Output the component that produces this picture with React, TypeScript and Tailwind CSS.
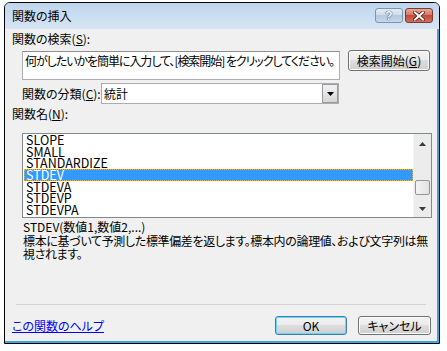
import React from "react";

const jp = "font-['Noto_Sans_CJK_JP',sans-serif] [font-feature-settings:'palt']";

const items = ["SLOPE", "SMALL", "STANDARDIZE", "STDEV", "STDEVA", "STDEVP", "STDEVPA"];

function Btn({ children, def, className }: { children: React.ReactNode; def?: boolean; className?: string }) {
  return (
    <div
      className={
        "flex items-center justify-center rounded-[3px] border text-[12px] leading-none text-black " +
        (def
          ? "border-[#3c7fb1] shadow-[inset_0_0_0_1px_#6ad6f6] bg-[linear-gradient(#f2f2f2_0%,#ebebeb_50%,#dddddd_50%,#cfcfcf_100%)] "
          : "border-[#707070] shadow-[inset_0_0_0_1px_#fcfcfc] bg-[linear-gradient(#f2f2f2_0%,#ebebeb_50%,#dddddd_50%,#cfcfcf_100%)] ") +
        (className ?? "")
      }
    >
      {children}
    </div>
  );
}

export default function App() {
  return (
    <div className={"w-[447px] h-[351px] bg-white pt-[2px] pl-[4px] " + jp}>
      <div className="w-[436px] h-[342px] border border-black rounded-t-[6px] flex flex-col overflow-hidden">
        {/* title bar */}
        <div className="h-[26px] shrink-0 flex bg-[linear-gradient(#bfd5ee,#d7e5f4)] pl-[7px] pr-[6px]">
          <div className="flex-1 text-[12px] leading-[16px] pt-[5px] text-black">関数の挿入</div>
          <div className="flex gap-[2px] pt-[5px]">
            <div className="w-[28px] h-[15px] rounded-[3px] border border-[#7d93ae] bg-[linear-gradient(#e4edf7_0%,#cfdcec_45%,#b4c8e0_50%,#c7d8ea_100%)] flex items-center justify-center">
              <span className="text-white font-bold text-[12px] leading-none font-['Liberation_Sans',sans-serif] [text-shadow:0_0_1px_#2a3a52,0_0_1px_#2a3a52]">?</span>
            </div>
            <div className="w-[28px] h-[15px] rounded-[3px] border border-[#7a3a30] bg-[linear-gradient(#e8a99c_0%,#d47865_45%,#c44a36_50%,#d2705a_100%)] flex items-center justify-center">
              <svg width="12" height="10" viewBox="0 0 12 10">
                <path d="M2 1.5 L10 8.5 M10 1.5 L2 8.5" stroke="#4a1f18" strokeWidth="3.6" strokeLinecap="square" />
                <path d="M2 1.5 L10 8.5 M10 1.5 L2 8.5" stroke="#ffffff" strokeWidth="2" strokeLinecap="square" />
              </svg>
            </div>
          </div>
        </div>

        {/* content */}
        <div className="flex-1 bg-[#f0f0f0] border-r-2 border-b-2 border-[#3aa6dd] flex flex-col text-[12px] text-black">
          <div className="mt-[2px] h-[16px] leading-[16px] pl-[7px]">
            関数の検索(<span className="underline">S</span>):
          </div>

          <div className="mt-[3px] h-[30px] flex items-start pl-[17px]">
            <div className="mt-[1px] w-[318px] h-[29px] bg-white border border-[#abadb3] border-t-[#8e8f8f] pl-[2px] pt-[1px] leading-[16px] tracking-[-1.05px] whitespace-nowrap overflow-hidden">
              何がしたいかを簡単に入力して、[検索開始] をクリックしてください。
            </div>
            <Btn className="ml-[8px] w-[82px] h-[21px]">
              検索開始(<span className="underline">G</span>)
            </Btn>
          </div>

          <div className="mt-[3px] h-[21px] flex items-center pl-[17px]">
            <div className="w-[79px] leading-[16px]">
              関数の分類(<span className="underline">C</span>):
            </div>
            <div className="w-[238px] h-[21px] bg-white border border-[#abadb3] flex items-center">
              <div className="flex-1 pl-[2px] leading-[16px]">統計</div>
              <div className="w-[16px] h-[19px] border border-[#9a9a9a] bg-[linear-gradient(#f2f2f2,#d6d6d6)] flex items-center justify-center">
                <svg width="7" height="4" viewBox="0 0 7 4">
                  <path d="M0 0 H7 L3.5 4 Z" fill="#000" />
                </svg>
              </div>
            </div>
          </div>

          <div className="mt-[2px] h-[16px] leading-[16px] pl-[7px]">
            関数名(<span className="underline">N</span>):
          </div>

          <div className="mt-[11px] ml-[17px] w-[410px] h-[85px] border border-[#828790] bg-white flex">
            <div className="flex-1 flex flex-col">
              {items.map((it) => (
                <div
                  key={it}
                  className={
                    "h-[11.67px] shrink-0 flex items-center text-[12.5px] leading-[11.67px] " +
                    (it === "STDEV"
                      ? "ml-[1px] bg-[#3399ff] text-white pl-[2px] outline-1 outline-dotted outline-[#f0b040] -outline-offset-1"
                      : "pl-[3px] text-black")
                  }
                >
                  {it}
                </div>
              ))}
            </div>
            <div className="w-[18px] bg-[#ececec] border-l border-[#f4f4f4] flex flex-col items-center">
              <div className="h-[17px] flex items-center justify-center pt-[2px]">
                <svg width="7" height="4" viewBox="0 0 7 4">
                  <path d="M0 4 H7 L3.5 0 Z" fill="#3a3a3a" />
                </svg>
              </div>
              <div className="mt-[29px] w-[15px] h-[15px] rounded-[2px] border border-[#959595] bg-[linear-gradient(90deg,#f4f4f4,#e2e2e2)]" />
              <div className="flex-1 flex items-end pb-[6px]">
                <svg width="7" height="4" viewBox="0 0 7 4">
                  <path d="M0 0 H7 L3.5 4 Z" fill="#3a3a3a" />
                </svg>
              </div>
            </div>
          </div>

          <div className="mt-[2px] h-[14px] leading-[14px] pl-[18px]">STDEV(数値1,数値2,...)</div>
          <div className="pl-[18px] pr-0 leading-[13px] tracking-[-0.35px]">
            標本に基づいて予測した標準偏差を返します。標本内の論理値、および文字列は無視されます。
          </div>

          <div className="flex-1" />
          <div className="mx-[11px] h-px bg-[#d5d5d5]" />
          <div className="mt-[11px] mb-[6px] h-[19px] flex items-center pl-[7px] pr-[6px]">
            <div className="flex-1 text-[#0000ff] underline leading-[16px]">この関数のヘルプ</div>
            <Btn def className="w-[72px] h-[19px]">OK</Btn>
            <Btn className="ml-[11px] w-[73px] h-[19px]">キャンセル</Btn>
          </div>
        </div>
      </div>
    </div>
  );
}
